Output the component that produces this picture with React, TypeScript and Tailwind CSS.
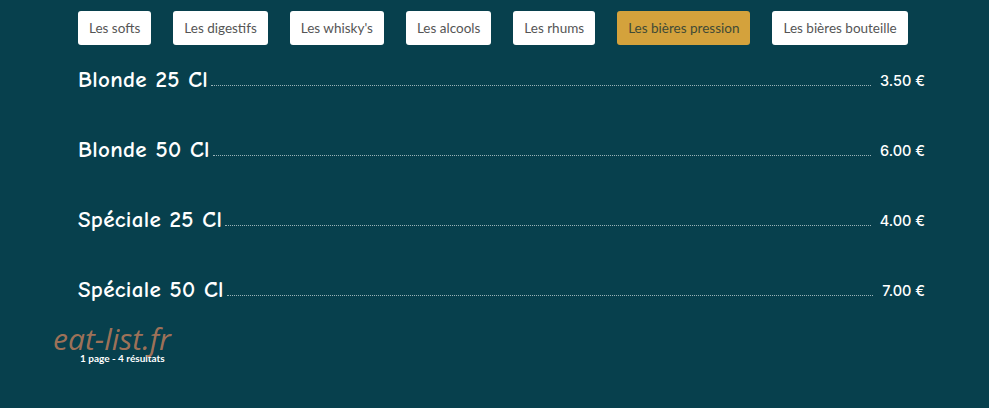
const categories = [
  "Les softs",
  "Les digestifs",
  "Les whisky's",
  "Les alcools",
  "Les rhums",
  "Les bières pression",
  "Les bières bouteille",
];

const items = [
  { name: "Blonde 25 Cl", price: "3.50 €" },
  { name: "Blonde 50 Cl", price: "6.00 €" },
  { name: "Spéciale 25 Cl", price: "4.00 €" },
  { name: "Spéciale 50 Cl", price: "7.00 €" },
];

export default function App() {
  const active = "Les bières pression";

  return (
    <div className="relative w-full min-h-[408px] bg-[#07404d] overflow-hidden">
      <div className="pl-[78px] pr-[64px] pt-[11px]">
        {/* Categories */}
        <div className="flex gap-[22px]">
          {categories.map((c) => (
            <button
              key={c}
              className={`h-[34px] px-[11px] rounded-[3px] text-[13.5px] whitespace-nowrap font-['Lato',sans-serif] ${
                c === active ? "bg-[#d4a23c] text-[#3f4a36]" : "bg-white text-[#555]"
              }`}
            >
              {c}
            </button>
          ))}
        </div>

        {/* Items */}
        <div className="mt-[20px] flex flex-col gap-[40px]">
          {items.map((it) => (
            <div key={it.name} className="flex items-end h-[30px]">
              <span className="text-[23px] leading-[30px] tracking-[0.3px] font-bold text-white font-['Comic_Sans_MS','Comic_Neue',cursive]">
                {it.name}
              </span>
              <span className="flex-1 ml-[3px] mb-[9px] border-b border-dotted border-white/60" />
              <span className="ml-[9px] mb-[5px] text-[14.5px] leading-[18px] text-white font-['Inter',sans-serif] font-medium">
                {it.price}
              </span>
            </div>
          ))}
        </div>

        {/* Pagination */}
        <div className="mt-[47px] pl-[2px] text-[10px] leading-[12px] font-bold text-white font-['Lato',sans-serif]">
          1 page - 4 résultats
        </div>
      </div>

      {/* Watermark */}
      <div className="absolute left-[53px] top-[321px] text-[30px] leading-[36px] italic text-[#b3795a]/90 font-['Open_Sans',sans-serif] pointer-events-none">
        eat-list.fr
      </div>
    </div>
  );
}
